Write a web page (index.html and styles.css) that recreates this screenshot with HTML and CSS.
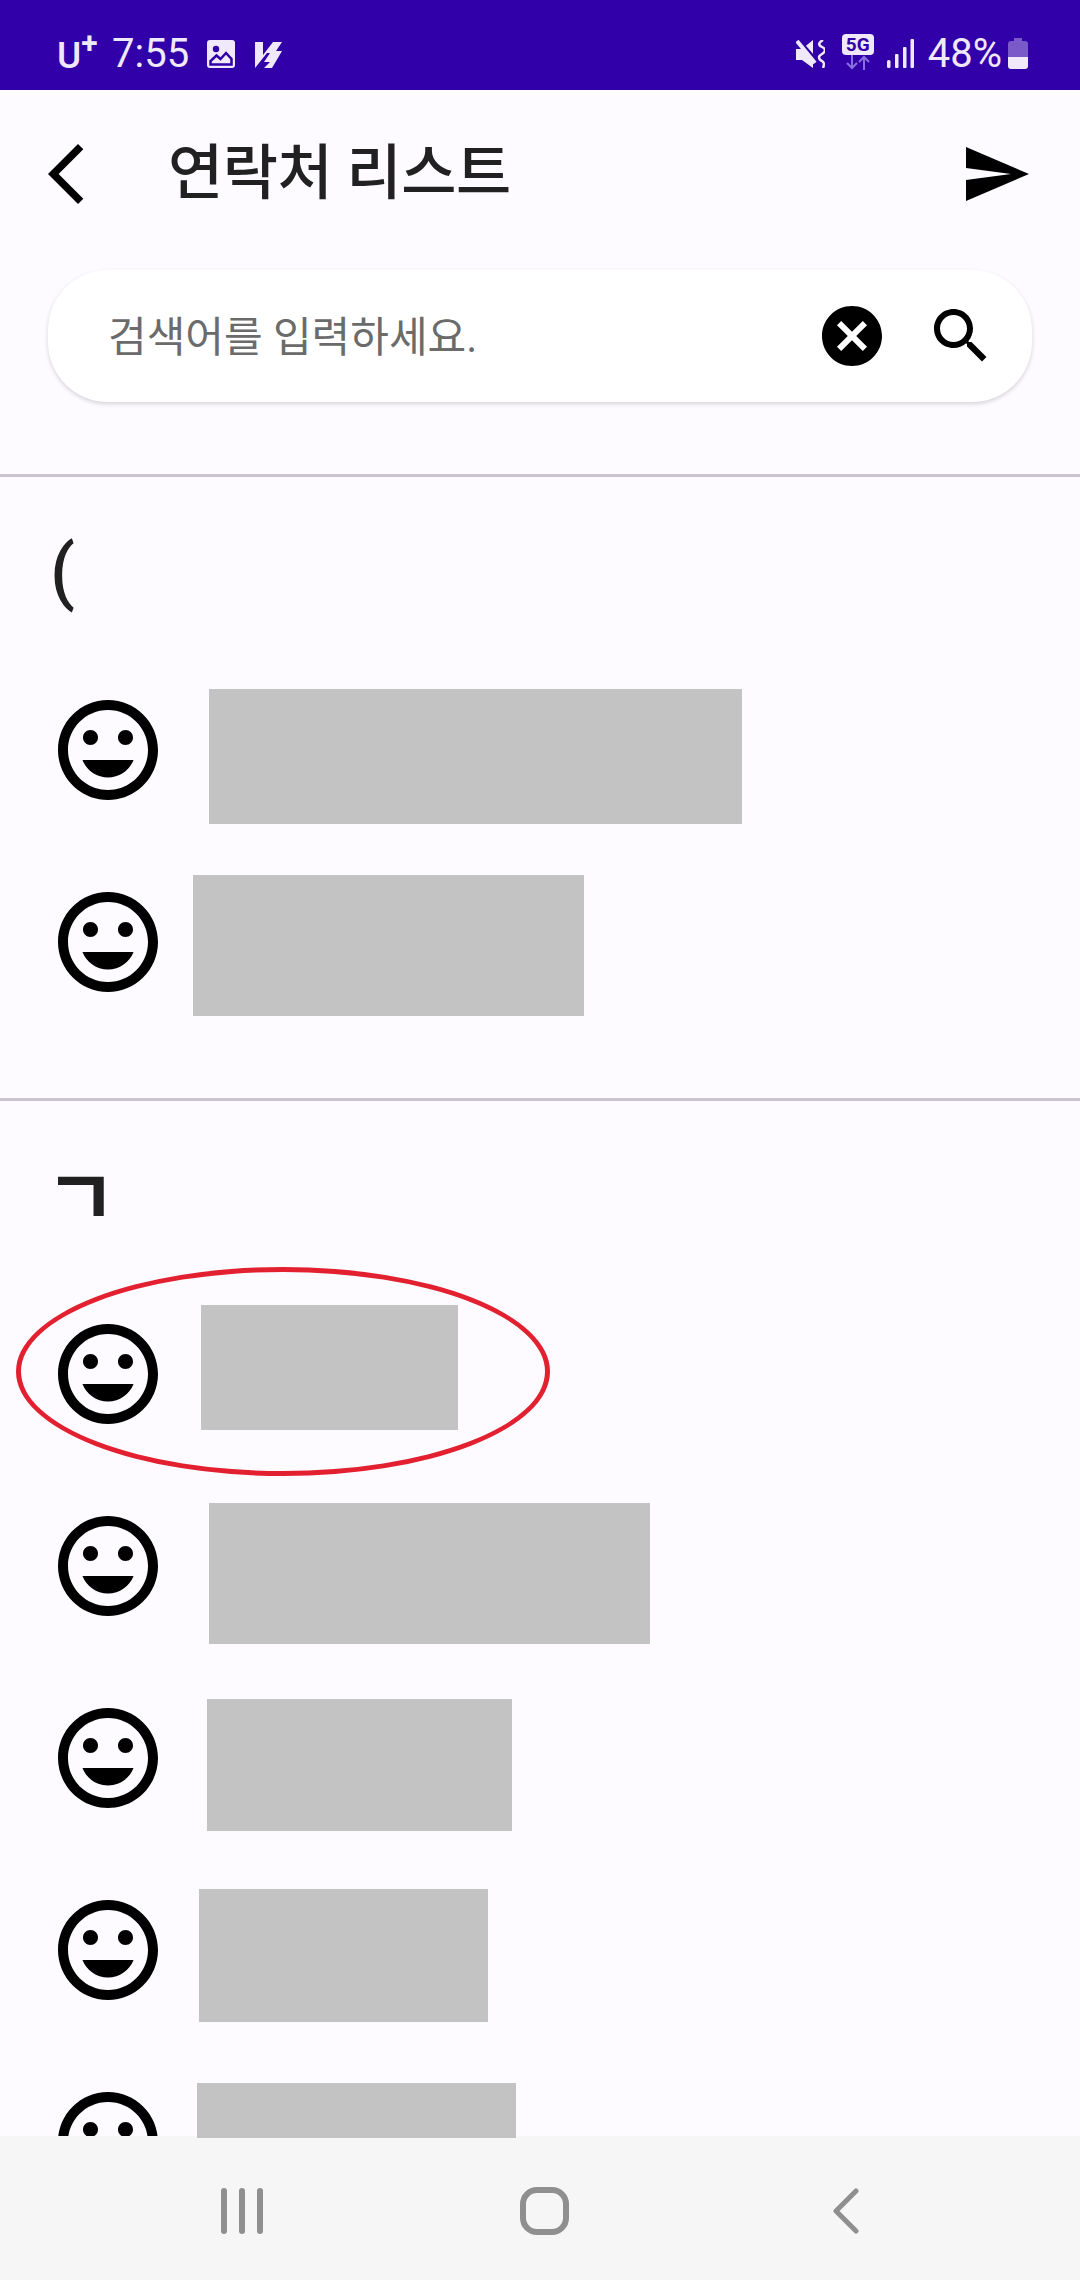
FILE: index.html
```html
<!DOCTYPE html>
<html lang="ko">
<head>
    <meta charset="UTF-8">
    <meta name="viewport" content="width=device-width, initial-scale=1.0">
    <title>연락처 리스트</title>
    <link rel="stylesheet" href="styles.css">
</head>
<body>
    <!-- Status bar -->
    <div class="status-bar">
        <div class="carrier"><span class="carrier-u">U</span><span class="carrier-plus">+</span></div>
        <span class="clock">7:55</span>
        <svg class="st-image" width="28" height="28" viewBox="0 0 28 28">
            <rect width="28" height="28" rx="3" fill="#efe9fb"/>
            <circle cx="9" cy="9" r="3.2" fill="#3100a8"/>
            <path d="M3.500 24.500V21l6-5.500 4 3.500L19 13l5.500 6v5.500z" fill="none" stroke="#3100a8" stroke-width="2.500"/>
        </svg>
        <svg class="st-vk" width="27" height="27" viewBox="0 0 27 27">
            <path d="M0 1h8v13L18 1h9l-6 9h6L17 27H9l6-6H9l6-9h-3L0 27z" fill="#efe9fb"/>
        </svg>
        <div class="status-right">
            <svg class="st-mute" width="29" height="28" viewBox="0 0 29 28">
                <path d="M0 9h6L17 0v28L6 20H0z" fill="#efe9fb"/>
                <path d="M3 0l19 22" stroke="#3100a8" stroke-width="3"/>
                <path d="M1 1l18 22" stroke="#efe9fb" stroke-width="4"/>
                <path d="M27 0C22 3 22 5 26 7c4 2 4 4 0 7-4 2-4 5 0 7 3 2 2 4 1 7" fill="none" stroke="#efe9fb" stroke-width="2.500"/>
            </svg>
            <div class="net">
                <span class="net-badge">5G</span>
                <svg width="26" height="15" viewBox="0 0 26 15">
                    <path d="M7 0v13M2 8l5 5 5-5M19 15V2M14 7l5-5 5 5" fill="none" stroke="#8a6fe0" stroke-width="2"/>
                </svg>
            </div>
            <svg class="st-signal" width="27" height="29" viewBox="0 0 27 29">
                <rect x="0" y="21" width="3.500" height="8" rx="1.500" fill="#efe9fb"/>
                <rect x="8" y="15" width="3.500" height="14" rx="1" fill="#efe9fb"/>
                <rect x="16" y="8" width="3.500" height="21" rx="1" fill="#efe9fb"/>
                <rect x="23.500" y="0" width="3.500" height="29" rx="1" fill="#efe9fb"/>
            </svg>
            <span class="battery-text">48%</span>
            <svg class="st-battery" width="20" height="31" viewBox="0 0 20 31">
                <path d="M6 0h8v3h3a3 3 0 0 1 3 3v13H0V6a3 3 0 0 1 3-3h3z" fill="#7a5ac8"/>
                <path d="M0 19h20v9a3 3 0 0 1-3 3H3a3 3 0 0 1-3-3z" fill="#efe9fb"/>
            </svg>
        </div>
    </div>

    <!-- Toolbar -->
    <header class="toolbar">
        <svg class="icon-72" viewBox="0 0 24 24"><path d="M17.770 3.770 16 2 6 12l10 10 1.770-1.770L9.540 12z"/></svg>
        <h1 class="title">연락처 리스트</h1>
        <svg class="icon-72" viewBox="0 0 24 24"><path d="M2.010 21 23 12 2.010 3 2 10l15 2-15 2z"/></svg>
    </header>

    <main class="content">
        <div class="search">
            <span class="search-hint">검색어를 입력하세요.</span>
            <svg class="icon-72" viewBox="0 0 24 24"><path d="M12 2C6.470 2 2 6.470 2 12s4.470 10 10 10 10-4.470 10-10S17.530 2 12 2zm5 13.590L15.590 17 12 13.410 8.410 17 7 15.590 10.590 12 7 8.410 8.410 7 12 10.590 15.590 7 17 8.410 13.410 12 17 15.590z"/></svg>
            <svg class="icon-72" viewBox="0 0 24 24"><path d="M15.500 14h-.790l-.280-.270C15.410 12.590 16 11.110 16 9.500 16 5.910 13.090 3 9.500 3S3 5.910 3 9.500 5.910 16 9.500 16c1.610 0 3.090-.590 4.230-1.570l.270.280v.790l5 4.990L20.490 19l-4.990-5zm-6 0C7.010 14 5 11.990 5 9.500S7.010 5 9.500 5 14 7.010 14 9.500 11.990 14 9.500 14z"/></svg>
        </div>

        <section class="group">
            <h2 class="group-title">(</h2>
            <div class="row">
                <svg class="mood" viewBox="0 0 24 24"><use href="#mood"/></svg>
                <div class="redact redact-1"></div>
            </div>
            <div class="row">
                <svg class="mood" viewBox="0 0 24 24"><use href="#mood"/></svg>
                <div class="redact redact-2"></div>
            </div>
        </section>

        <section class="group">
            <h2 class="group-title group-title-jamo">ㄱ</h2>
            <div class="row">
                <svg class="mood" viewBox="0 0 24 24"><use href="#mood"/></svg>
                <div class="redact redact-3"></div>
                <div class="circled"></div>
            </div>
            <div class="row">
                <svg class="mood" viewBox="0 0 24 24"><use href="#mood"/></svg>
                <div class="redact redact-4"></div>
            </div>
            <div class="row">
                <svg class="mood" viewBox="0 0 24 24"><use href="#mood"/></svg>
                <div class="redact redact-5"></div>
            </div>
            <div class="row">
                <svg class="mood" viewBox="0 0 24 24"><use href="#mood"/></svg>
                <div class="redact redact-6"></div>
            </div>
            <div class="row">
                <svg class="mood" viewBox="0 0 24 24"><use href="#mood"/></svg>
                <div class="redact redact-7"></div>
            </div>
        </section>
    </main>

    <!-- Navigation bar -->
    <nav class="nav-bar">
        <svg class="nav-recent" width="42" height="46" viewBox="0 0 42 46">
            <path d="M3 3v40M21 3v40M39 3v40" stroke="#8f8f8f" stroke-width="6" stroke-linecap="round"/>
        </svg>
        <svg class="nav-home" width="49" height="48" viewBox="0 0 49 48">
            <rect x="3" y="3" width="43" height="42" rx="14" fill="none" stroke="#8f8f8f" stroke-width="6"/>
        </svg>
        <svg class="nav-back" width="26" height="46" viewBox="0 0 26 46">
            <path d="M23 3 3 23l20 20" fill="none" stroke="#8f8f8f" stroke-width="5" stroke-linecap="round" stroke-linejoin="round"/>
        </svg>
    </nav>

    <svg class="defs" width="0" height="0">
        <symbol id="mood" viewBox="0 0 24 24">
            <path d="M11.990 2C6.470 2 2 6.480 2 12s4.470 10 9.990 10C17.520 22 22 17.520 22 12S17.520 2 11.990 2zM12 20c-4.420 0-8-3.580-8-8s3.580-8 8-8 8 3.580 8 8-3.580 8-8 8zm3.500-9c.830 0 1.500-.670 1.500-1.500S16.330 8 15.500 8 14 8.670 14 9.500s.670 1.500 1.500 1.500zm-7 0c.830 0 1.500-.670 1.500-1.500S9.330 8 8.500 8 7 8.670 7 9.500 7.670 11 8.500 11zm3.500 6.500c2.330 0 4.310-1.460 5.110-3.500H6.890c.800 2.040 2.780 3.500 5.110 3.500z"/>
        </symbol>
    </svg>
</body>
</html>
```

FILE: styles.css
```css
* {
    box-sizing: border-box;
}

body {
    margin: 0;
    height: 100vh;
    overflow: hidden;
    display: flex;
    flex-direction: column;
    background-color: #fdfbff;
    color: #1c1b1f;
    font-family: Roboto, "Noto Sans CJK KR", sans-serif;
}

/* Status bar */
.status-bar {
    flex: none;
    height: 90px;
    display: flex;
    align-items: center;
    padding: 0 52px 0 57px;
    background-color: #3100a8;
    color: #efe9fb;
    font-size: 40px;
}

.carrier {
    display: flex;
    align-items: flex-start;
    width: 56px;
    height: 40px;
    margin-top: 16px;
}

.carrier-u {
    font-size: 37px;
    font-weight: 500;
    line-height: 40px;
    margin-top: 3px;
}

.carrier-plus {
    font-size: 30px;
    font-weight: 700;
    line-height: 30px;
    margin-top: -5px;
}

.clock {
    margin-left: -1px;
    line-height: 40px;
    margin-top: 17px;
}

.st-image {
    margin: 18px 0 0 18px;
}

.st-vk {
    margin: 19px 0 0 20px;
}

.status-right {
    margin-left: auto;
    display: flex;
    align-items: center;
}

.st-mute {
    margin-top: 18px;
}

.net {
    display: flex;
    flex-direction: column;
    align-items: center;
    width: 32px;
    margin: 14px 0 0 17px;
}

.net-badge {
    width: 32px;
    height: 21px;
    border-radius: 4px;
    background-color: #efe9fb;
    color: #3100a8;
    font-size: 19px;
    font-weight: 700;
    line-height: 21px;
    text-align: center;
}

.st-signal {
    margin: 17px 0 0 13px;
}

.battery-text {
    margin: 17px 0 0 14px;
    line-height: 40px;
}

.st-battery {
    margin: 17px 0 0 6px;
}

/* Toolbar */
.toolbar {
    flex: none;
    height: 168px;
    display: flex;
    align-items: center;
    padding: 0 48px 0 30px;
}

.title {
    flex: 1;
    margin: 0 0 0 66px;
    font-size: 60px;
    font-weight: 500;
    line-height: 72px;
    letter-spacing: -0.5px;
    color: #212121;
}

.icon-72 {
    flex: none;
    width: 72px;
    height: 72px;
}

/* Search */
.search {
    height: 132px;
    margin: 12px 48px 72px;
    display: flex;
    align-items: center;
    gap: 37px;
    padding: 0 35px 0 60px;
    background-color: #ffffff;
    border-radius: 60px;
    box-shadow: 0 2px 4px rgba(0, 0, 0, 0.16);
}

.search-hint {
    flex: 1;
    margin-bottom: 6px;
    font-size: 42px;
    color: #6b6b6b;
}

/* Contact list */
.content {
    flex: 1;
    min-height: 0;
}

.group {
    border-top: 3px solid #cac4d0;
    padding-bottom: 60px;
}

.group-title {
    height: 177px;
    margin: 0;
    padding: 55px 0 0 50px;
    font-size: 72px;
    font-weight: 500;
    line-height: 80px;
    color: #212121;
}

.group-title-jamo {
    padding: 59px 0 0 45px;
    font-size: 78px;
    font-weight: 700;
}

.row {
    position: relative;
    height: 192px;
    display: flex;
    align-items: center;
    padding-left: 48px;
}

.mood {
    width: 120px;
    height: 120px;
}

.defs {
    position: absolute;
}

/* Names are masked in the source picture */
.redact {
    position: absolute;
    z-index: 2;
    background-color: #c3c3c3;
}

.redact-1 { left: 209px; top: 35px; width: 533px; height: 135px; }
.redact-2 { left: 193px; top: 29px; width: 391px; height: 141px; }
.redact-3 { left: 201px; top: 27px; width: 257px; height: 125px; }
.redact-4 { left: 209px; top: 33px; width: 441px; height: 141px; }
.redact-5 { left: 207px; top: 37px; width: 305px; height: 132px; }
.redact-6 { left: 199px; top: 35px; width: 289px; height: 133px; }
.redact-7 { left: 197px; top: 37px; width: 319px; height: 55px; }

/* Red marker drawn over the screenshot */
.circled {
    position: absolute;
    left: 16px;
    top: -11px;
    width: 534px;
    height: 209px;
    border: 5px solid #e2202f;
    border-radius: 50%;
}

/* Navigation bar */
.nav-bar {
    position: relative;
    z-index: 1;
    flex: none;
    height: 144px;
    display: flex;
    align-items: center;
    padding: 6px 0 0 221px;
    background-color: #f6f6f6;
}

.nav-recent {
    margin-right: 257px;
}

.nav-home {
    margin-right: 264px;
}
```
